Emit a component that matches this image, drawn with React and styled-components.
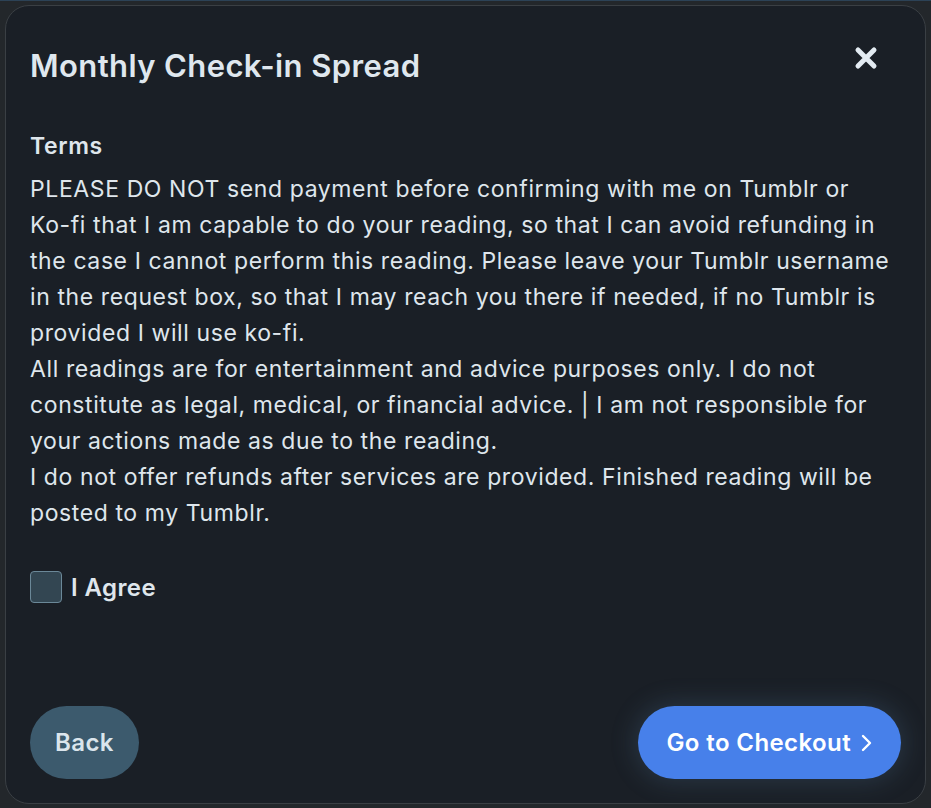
import React, { useState } from "react";
import styled, { createGlobalStyle } from "styled-components";

const GlobalStyle = createGlobalStyle`
  html, body {
    margin: 0;
    padding: 0;
    background: #23272b;
    font-family: "Inter", "Noto Sans", sans-serif;
  }
  * { box-sizing: border-box; }
`;

export default function App() {
  const [agreed, setAgreed] = useState(false);

  return (
    <>
      <GlobalStyle />
      <Backdrop>
        <Modal>
          <Header>
            <Title>Monthly Check-in Spread</Title>
            <CloseBtn aria-label="Close">
              <svg width="24" height="24" viewBox="0 0 24 24">
                <path d="M4 4 L20 20 M20 4 L4 20" stroke="#e3ebf2" strokeWidth="5" strokeLinecap="round" />
              </svg>
            </CloseBtn>
          </Header>

          <Body>
            <SectionTitle>Terms</SectionTitle>
            <Terms>
              PLEASE DO NOT send payment before confirming with me on Tumblr or <NoWrap>Ko-fi</NoWrap> that I am capable to do your reading, so that I can avoid refunding in the case I cannot perform this reading. Please leave your Tumblr username in the request box, so that I may reach you there if needed, if no Tumblr is provided I will use <NoWrap>ko-fi.</NoWrap>
              <br />
              All readings are for entertainment and advice purposes only. I do not constitute as legal, medical, or financial advice. | I am not responsible for your actions made as due to the reading.
              <br />
              I do not offer refunds after services are provided. Finished reading will be posted to my Tumblr.
            </Terms>

            <AgreeRow onClick={() => setAgreed(!agreed)}>
              <Checkbox checked={agreed} />
              <AgreeLabel>I Agree</AgreeLabel>
            </AgreeRow>
          </Body>

          <Footer>
            <PillBtn variant="secondary">Back</PillBtn>
            <PillBtn variant="primary">
              Go to Checkout
              <svg width="14" height="20" viewBox="0 0 14 20">
                <path d="M3 3 L10 10 L3 17" fill="none" stroke="#fff" strokeWidth="2.4" strokeLinecap="round" strokeLinejoin="round" />
              </svg>
            </PillBtn>
          </Footer>
        </Modal>
      </Backdrop>
    </>
  );
}

const Backdrop = styled.div`
  width: 931px;
  height: 808px;
  padding: 4px 5px 4px 5px;
  background: #23272b;
  border-top: 1px solid #2c4256;
`;

const Modal = styled.div`
  display: flex;
  flex-direction: column;
  width: 100%;
  height: 799px;
  background-color: #1a1f26;
  border: 1px solid #3a3f44;
  border-radius: 24px;
  padding: 0 24px 24px 24px;
`;

const Header = styled.div`
  display: flex;
  align-items: center;
  justify-content: space-between;
  height: 122px;
  padding-bottom: 4px;
`;

const Title = styled.h1`
  margin: 0;
  font-size: 31px;
  font-weight: 600;
  color: #dfe7ee;
  letter-spacing: 0.4px;
`;

const CloseBtn = styled.button`
  display: flex;
  align-items: center;
  justify-content: center;
  background: none;
  border: none;
  padding: 0;
  margin-right: 23px;
  margin-bottom: 14px;
  cursor: pointer;
`;

const Body = styled.div`
  flex: 1;
  display: flex;
  flex-direction: column;
`;

const SectionTitle = styled.div`
  font-size: 23px;
  font-weight: 600;
  letter-spacing: 0.6px;
  color: #dfe6ec;
  line-height: 36px;
  margin-bottom: 7px;
`;

const Terms = styled.div`
  font-size: 23px;
  letter-spacing: 0.6px;
  line-height: 36px;
  color: #dfe6ec;
  padding-right: 2px;
`;

const NoWrap = styled.span`
  white-space: nowrap;
`;

const AgreeRow = styled.label`
  display: flex;
  align-items: center;
  gap: 9px;
  margin-top: 40px;
  cursor: pointer;
`;

const Checkbox = styled.span`
  width: 32px;
  height: 32px;
  border-radius: 4px;
  background: ${(p) => (p.checked ? "#4780ea" : "#334652")};
  border: 1px solid #6b8898;
`;

const AgreeLabel = styled.span`
  font-size: 24px;
  font-weight: 600;
  letter-spacing: 0.4px;
  color: #dfe6ec;
`;

const Footer = styled.div`
  display: flex;
  justify-content: space-between;
  align-items: center;
`;

const PillBtn = styled.button`
  display: flex;
  align-items: center;
  gap: 9px;
  height: 73px;
  padding: 0 ${(p) => (p.variant === "primary" ? "27px 0 28px" : "25px")};
  border: none;
  border-radius: 37px;
  font-family: inherit;
  font-size: 24px;
  font-weight: 600;
  letter-spacing: 0.4px;
  cursor: pointer;
  color: ${(p) => (p.variant === "primary" ? "#ffffff" : "#dbe5ec")};
  background: ${(p) => (p.variant === "primary" ? "#4780ea" : "#3c5a6d")};
  box-shadow: ${(p) =>
    p.variant === "primary" ? "0 0 24px 4px rgba(90, 130, 170, 0.22)" : "none"};
`;
